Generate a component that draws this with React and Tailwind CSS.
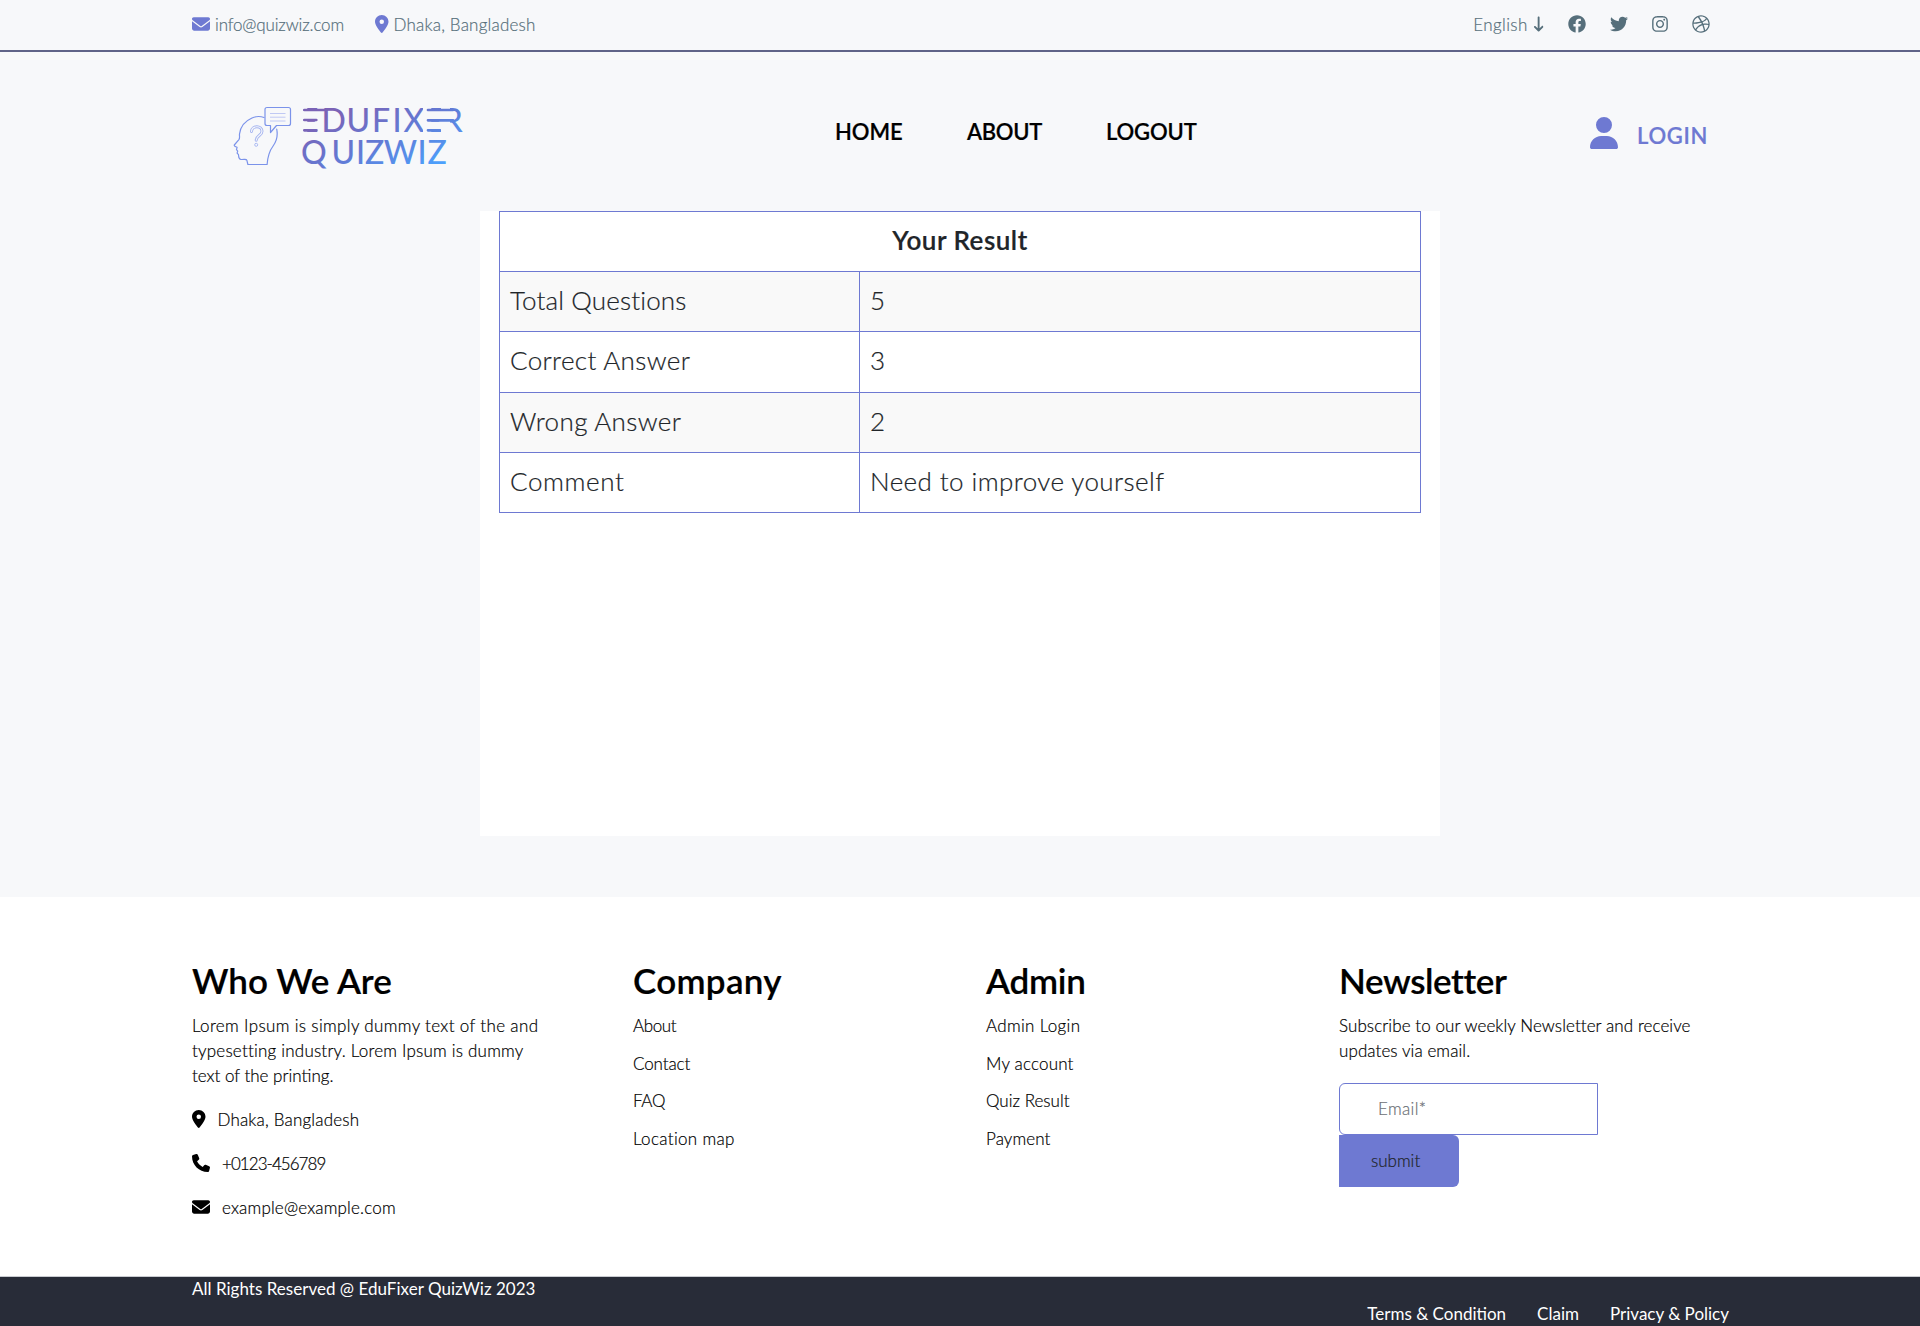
import { FaEnvelope, FaLocationDot, FaArrowDownLong, FaUser, FaPhone } from "react-icons/fa6";
import { FaFacebook, FaTwitter, FaInstagram, FaDribbble } from "react-icons/fa";

function Logo() {
  return (
    <svg className="block h-[82px] w-[236px] [-webkit-text-stroke:0]" viewBox="232 96 236 82" fill="none">
      <defs>
        <linearGradient id="brand" gradientUnits="userSpaceOnUse" x1="340" y1="110" x2="385" y2="205">
          <stop offset="0" stopColor="#7b63b6" />
          <stop offset="0.45" stopColor="#617bd6" />
          <stop offset="0.9" stopColor="#4aa3ff" />
        </linearGradient>
      </defs>
      <g stroke="#7b93ea" strokeWidth="1.2" strokeLinejoin="round" strokeLinecap="round">
        <path d="M264 117.5c-3.500-1.300-8-1.300-12 .5c-7 3-11.500 8.500-12.500 16c-.2 2.500 .6 4-.6 5.600l-4.600 5.400c-.4 1 1 1.600 2.800 2.200l-.6 2.500 1.200 1.400-.6 2 1.400 1.600c.3 2.500-.2 4.500 2.500 4.800c3.500.2 5.500-.8 5.900.8l1 4.200h19.200c.5-7 1.500-12.500 6-18.500c3.500-4.700 5-10 3.600-17" />
        <path d="M267 107.500h21.500q2 0 2 2v14q0 2-2 2h-12l-6 7v-7h-3.500q-2 0-2-2v-14q0-2 2-2z" />
      </g>
      <path d="M270 113.500h15.500M270 117.200h15.500M270 121h15.500" stroke="#c0c9f4" strokeWidth="1" />
      <path d="M251.500 131.500c.5-6.500 10.500-6 10.500-.3c0 4.600-5.600 4-5.800 9" stroke="#a3b3f0" strokeWidth="3" strokeLinecap="round" />
      <path d="M251.500 131.500c.5-6.500 10.500-6 10.500-.3c0 4.600-5.600 4-5.800 9" stroke="#f7f8fa" strokeWidth="1.200" strokeLinecap="round" />
      <circle cx="256.200" cy="144.800" r="1.500" stroke="#a3b3f0" strokeWidth="0.9" />
      <g fill="url(#brand)" className="font-[Lato] text-[32px] font-medium">
        <text y="131.700" x="300 321.500 346.500 372 392.500 403.500 424 442.500">EDUFIXER</text>
        <text y="163.700" x="301 331.500 356 365 383.800 417.500 427.500">QUIZWIZ</text>
      </g>
      <path d="M299 106h8.300v27.500h-8.300zM423 106h8.300v27.500h-8.300zM441 106h9v27.500h-9z" fill="#f7f8fa" />
      <g stroke="url(#brand)" strokeWidth="2.700" strokeLinecap="round">
        <path d="M304.300 110l20 .01M304.300 120l12 .01M304.300 130.300l12 .01M428 110l25 .01M428 120.300l25 .01M428 130.300l11.500 .01" />
      </g>
    </svg>
  );
}

const rows = [
  { label: "Total Questions", value: "5", cls: "h-[60px] bg-[#f9f9f9]", ls: "pb-[3px] tracking-[0.15px]" },
  { label: "Correct Answer", value: "3", cls: "h-[61px]", ls: "pb-[5px] tracking-[0.36px]" },
  { label: "Wrong Answer", value: "2", cls: "h-[60px] bg-[#f9f9f9]", ls: "pb-[3px] tracking-[0.35px]" },
  { label: "Comment", value: "Need to improve yourself", cls: "h-[60px]", ls: "pb-[3px] tracking-[0.6px]" },
];

const company = [
  ["About", "tracking-[-0.4px]"],
  ["Contact", "tracking-[-0.1px]"],
  ["FAQ", "tracking-[-0.3px]"],
  ["Location map", "tracking-[0.33px]"],
];
const admin = [
  ["Admin Login", "tracking-[0.32px]"],
  ["My account", "tracking-[0.18px]"],
  ["Quiz Result", "tracking-[0.02px]"],
  ["Payment", "tracking-[0.1px]"],
];

function Links({ title, items, className, ls }) {
  return (
    <div className={className}>
      <h2 className={"text-[35px] leading-10 font-semibold " + ls}>{title}</h2>
      <ul className="mt-[13px] flex flex-col gap-[12.5px]">
        {items.map(([t, c]) => (
          <li key={t} className={c}>{t}</li>
        ))}
      </ul>
    </div>
  );
}

export default function App() {
  return (
    <div className="h-[1326px] w-[1920px] overflow-hidden bg-white font-[Lato,sans-serif] text-[17px] leading-[25px] font-light text-black [-webkit-text-stroke:0.2px]">
      <div className="bg-[#f7f8fa]">
        <div className="h-[52px] border-b-2 border-[#5f6388] px-48 text-[#566f7b]">
          <div className="flex h-12 items-center">
            <FaEnvelope className="size-[18px] text-[#6e79d2]" />
            <span className="ml-[5px] w-[160px] tracking-[-0.15px]">info@quizwiz.com</span>
            <FaLocationDot className="h-[18px] w-[13.5px] text-[#6e79d2]" />
            <span className="ml-[5px] tracking-[0.2px]">Dhaka, Bangladesh</span>
            <div className="ml-auto flex items-center pr-[18px]">
              <span className="tracking-[0.4px]">English</span>
              <FaArrowDownLong className="ml-[5px] h-[18px] w-[11.25px]" />
              <FaFacebook className="ml-6 size-[18px]" />
              <FaTwitter className="ml-6 size-[18px]" />
              <FaInstagram className="ml-6 h-[18px] w-4" />
              <FaDribbble className="ml-6 size-[18px]" />
            </div>
          </div>
        </div>

        <header className="flex h-[159px] pl-[232px] text-[22px] leading-8 font-semibold">
          <div className="mt-[44px] w-[603px]">
            <Logo />
          </div>
          <nav className="mt-16 flex w-[756px]">
            <a className="w-[132px] tracking-[-0.1px]">HOME</a>
            <a className="w-[139px] tracking-[-0.3px]">ABOUT</a>
            <a className="tracking-[-0.15px]">LOGOUT</a>
          </nav>
          <a className="mt-[65px] -ml-px flex text-[#6e79d2]">
            <FaUser className="h-8 w-7" />
            <span className="mt-[3px] ml-[19px] tracking-[0.7px]">LOGIN</span>
          </a>
        </header>

        <main className="h-[686px]">
          <section className="mx-auto h-[625px] w-[960px] bg-white pl-[19px]">
            <div className="w-[922px] border border-b-0 border-[#6e79d2] text-[26px] leading-8 text-[#212529]">
              <div className="flex h-[60px] items-center justify-center border-b border-[#6e79d2] pb-[3px] font-semibold tracking-[0.5px]">
                Your Result
              </div>
              {rows.map((r) => (
                <div key={r.label} className={"flex border-b border-[#6e79d2] " + r.cls}>
                  <div className={"flex w-[360px] items-center border-r border-[#6e79d2] pl-[10px] " + r.ls}>{r.label}</div>
                  <div className="flex items-center pb-[4px] pl-[10px] tracking-[0.42px]">{r.value}</div>
                </div>
              ))}
            </div>
          </section>
        </main>
      </div>

      <footer>
        <div className="flex h-[379px] pt-[63px] pl-48">
          <div className="w-[441px]">
            <h2 className="text-[35px] leading-10 font-semibold tracking-[0px]">Who We Are</h2>
            <p className="mt-[13px]">
              <span className="block tracking-[0.35px]">Lorem Ipsum is simply dummy text of the and</span>
              <span className="block tracking-[0.21px]">typesetting industry. Lorem Ipsum is dummy</span>
              <span className="block">text of the printing.</span>
            </p>
            <div className="mt-[19px] flex flex-col gap-[19px]">
              <div className="flex items-center gap-3">
                <FaLocationDot className="-mt-0.5 h-[18px] w-[13.5px]" />
                <span className="tracking-[0.18px]">Dhaka, Bangladesh</span>
              </div>
              <div className="flex items-center gap-3">
                <FaPhone className="-mt-0.5 size-[18px]" />
                <span className="tracking-[-0.95px]">+0123-456789</span>
              </div>
              <div className="flex items-center gap-3">
                <FaEnvelope className="-mt-0.5 size-[18px]" />
                <span className="tracking-[0.18px]">example@example.com</span>
              </div>
            </div>
          </div>
          <Links title="Company" items={company} className="w-[353px]" ls="tracking-[0.3px]" />
          <Links title="Admin" items={admin} className="w-[353px]" ls="tracking-[-0.2px]" />
          <div>
            <h2 className="text-[35px] leading-10 font-semibold tracking-[-0.4px]">Newsletter</h2>
            <p className="mt-[13px] tracking-[0.08px]">
              Subscribe to our weekly Newsletter and receive
              <br />
              updates via email.
            </p>
            <div className="mt-5 flex h-[52px] w-[259px] items-center rounded-l-md border border-[#6e79d2] pb-0.5 pl-[38px] tracking-[0.35px] text-[#6b6f75]">
              Email*
            </div>
            <button className="flex h-[52px] w-[120px] items-center rounded-r-md bg-[#6e79d2] pb-0.5 pl-8 text-[#212529]">
              submit
            </button>
          </div>
        </div>
        <div className="flex h-[50px] justify-between border-t border-[#c9cbd0] bg-[#282c38] pr-[191px] pl-48 font-normal text-white [-webkit-text-stroke:0]">
          <span className="-mt-px tracking-[0.02px]">All Rights Reserved @ EduFixer QuizWiz 2023</span>
          <div className="mt-6 flex gap-[31px]">
            <a>Terms &amp; Condition</a>
            <a>Claim</a>
            <a>Privacy &amp; Policy</a>
          </div>
        </div>
      </footer>
    </div>
  );
}
